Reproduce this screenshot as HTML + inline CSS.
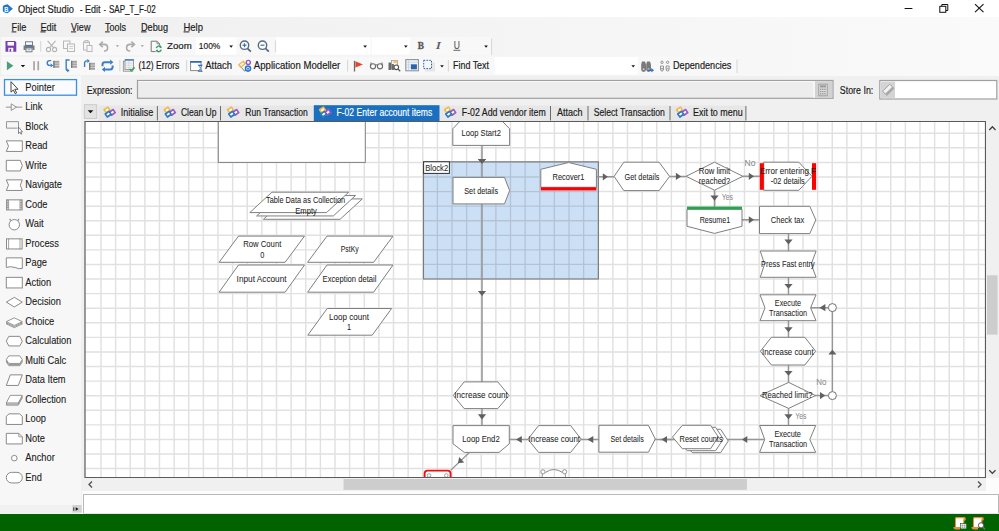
<!DOCTYPE html>
<html><head><meta charset="utf-8"><title>Object Studio</title>
<style>
html,body{margin:0;padding:0;width:999px;height:531px;overflow:hidden;background:#f0f0f0}
svg{display:block}
text{font-family:"Liberation Sans",sans-serif;white-space:pre}
</style></head><body>
<svg width="999" height="531" viewBox="0 0 999 531">
<rect x="0" y="0" width="999" height="531" fill="#f0f0f0" stroke="none" stroke-width="1" />
<rect x="0" y="0" width="999" height="17" fill="#ffffff" stroke="none" stroke-width="1" />
<defs><linearGradient id="tbg" x1="0" y1="0" x2="1" y2="0"><stop offset="0" stop-color="#efefef"/><stop offset="1" stop-color="#fafafa"/></linearGradient></defs>
<rect x="0" y="17" width="999" height="59" fill="url(#tbg)" stroke="none" stroke-width="1" />
<rect x="0" y="76" width="999" height="437" fill="#f0f0f0" stroke="none" stroke-width="1" />
<rect x="0" y="76" width="81" height="437" fill="#f7f7f7" stroke="none" stroke-width="1" />
<rect x="0" y="514" width="999" height="17" fill="#006300" stroke="none" stroke-width="1" />
<path d="M2.8,7 Q2.8,5.2 4.6,4.9 L7.6,4.3 L12.9,8.8 L7.6,13.2 L4.6,12.6 Q2.8,12.3 2.8,10.6 Z" fill="#1f7ac8" stroke="none" stroke-width="1" />
<text x="4.30" y="11.60" font-size="7" fill="#ffffff" textLength="4.20" lengthAdjust="spacingAndGlyphs" stroke="#ffffff" stroke-width="0" font-weight="bold">B</text>
<text x="17.90" y="13.20" font-size="10.9" fill="#1b1b1b" textLength="56.10" lengthAdjust="spacingAndGlyphs" stroke="#1b1b1b" stroke-width="0.18" >Object Studio</text>
<text x="80.00" y="13.20" font-size="10.9" fill="#1b1b1b" textLength="2.50" lengthAdjust="spacingAndGlyphs" stroke="#1b1b1b" stroke-width="0.18" >-</text>
<text x="85.00" y="13.20" font-size="10.9" fill="#1b1b1b" textLength="15.40" lengthAdjust="spacingAndGlyphs" stroke="#1b1b1b" stroke-width="0.18" >Edit</text>
<text x="103.80" y="13.20" font-size="10.9" fill="#1b1b1b" textLength="2.10" lengthAdjust="spacingAndGlyphs" stroke="#1b1b1b" stroke-width="0.18" >-</text>
<text x="108.90" y="13.20" font-size="10.9" fill="#1b1b1b" textLength="46.80" lengthAdjust="spacingAndGlyphs" stroke="#1b1b1b" stroke-width="0.18" >SAP_T_F-02</text>
<line x1="904.6" y1="8.5" x2="912.4" y2="8.5" stroke="#111" stroke-width="1" />
<rect x="939.8" y="6.3" width="6" height="6" fill="none" stroke="#111" stroke-width="1" />
<path d="M941.8,6.3 V4.5 H947.8 V10.5 H945.8" fill="none" stroke="#111" stroke-width="1" />
<line x1="975" y1="4.2" x2="983.5" y2="12.2" stroke="#111" stroke-width="1.1" />
<line x1="983.5" y1="4.2" x2="975" y2="12.2" stroke="#111" stroke-width="1.1" />
<text x="11.60" y="30.90" font-size="10.8" fill="#1b1b1b" textLength="14.70" lengthAdjust="spacingAndGlyphs" stroke="#1b1b1b" stroke-width="0.18" >File</text>
<line x1="11.6" y1="31.9" x2="16.33681332495286" y2="31.9" stroke="#222" stroke-width="1" />
<text x="40.40" y="30.90" font-size="10.8" fill="#1b1b1b" textLength="15.90" lengthAdjust="spacingAndGlyphs" stroke="#1b1b1b" stroke-width="0.18" >Edit</text>
<line x1="40.4" y1="31.9" x2="45.63159460140212" y2="31.9" stroke="#222" stroke-width="1" />
<text x="71.00" y="30.90" font-size="10.8" fill="#1b1b1b" textLength="19.40" lengthAdjust="spacingAndGlyphs" stroke="#1b1b1b" stroke-width="0.18" >View</text>
<line x1="71" y1="31.9" x2="76.1174331100865" y2="31.9" stroke="#222" stroke-width="1" />
<text x="105.00" y="30.90" font-size="10.8" fill="#1b1b1b" textLength="21.00" lengthAdjust="spacingAndGlyphs" stroke="#1b1b1b" stroke-width="0.18" >Tools</text>
<line x1="105" y1="31.9" x2="109.67061448359208" y2="31.9" stroke="#222" stroke-width="1" />
<text x="141.00" y="30.90" font-size="10.8" fill="#1b1b1b" textLength="27.00" lengthAdjust="spacingAndGlyphs" stroke="#1b1b1b" stroke-width="0.18" >Debug</text>
<line x1="141" y1="31.9" x2="146.62439793789125" y2="31.9" stroke="#222" stroke-width="1" />
<text x="183.50" y="30.90" font-size="10.8" fill="#1b1b1b" textLength="19.50" lengthAdjust="spacingAndGlyphs" stroke="#1b1b1b" stroke-width="0.18" >Help</text>
<line x1="183.5" y1="31.9" x2="189.3201978543792" y2="31.9" stroke="#222" stroke-width="1" />
<rect x="1" y="37" width="491" height="18.5" fill="#f8f8f8" stroke="none" stroke-width="1" />
<rect x="1" y="56.5" width="737" height="18.5" fill="#f8f8f8" stroke="none" stroke-width="1" />
<path d="M5.5,41 H15 L16.3,42.3 V51.7 H5.5 Z" fill="#7a3db5" stroke="none" stroke-width="1" />
<rect x="7.5" y="42" width="6.5" height="3.6" fill="#ffffff" stroke="none" stroke-width="1" />
<rect x="8.3" y="47.8" width="5" height="3.9" fill="#ffffff" stroke="none" stroke-width="1" />
<rect x="9.6" y="48.8" width="1.6" height="2.9" fill="#7a3db5" stroke="none" stroke-width="1" />
<rect x="25.5" y="41.8" width="7" height="3.5" fill="#ffffff" stroke="#7a7a7a" stroke-width="1" />
<path d="M23.6,45.5 H34.5 V50 H32.5 V48 H25.6 V50 H23.6 Z" fill="#7a7a7a" stroke="none" stroke-width="1" />
<rect x="25.6" y="45.2" width="7" height="1.1" fill="#2a73c2" stroke="none" stroke-width="1" />
<rect x="26" y="48" width="6" height="3.8" fill="#ffffff" stroke="#7a7a7a" stroke-width="1" />
<rect x="27.5" y="49.3" width="3" height="1" fill="#6aa0d8" stroke="none" stroke-width="1" />
<line x1="40.7" y1="41" x2="40.7" y2="51.8" stroke="#d6d6d6" stroke-width="1" />
<g stroke="#b4b4b4" fill="none" stroke-width="1.1"><circle cx="48.5" cy="49.5" r="2.1"/><circle cx="54.6" cy="49.5" r="2.1"/><line x1="49.6" y1="47.6" x2="55.5" y2="40.8"/><line x1="53.5" y1="47.6" x2="47.6" y2="40.8"/></g>
<g stroke="#b8b8b8" fill="#f7f7f7" stroke-width="1"><rect x="63.5" y="41" width="6.5" height="7.5"/><rect x="67.5" y="44" width="7" height="7.5"/></g>
<g stroke="#c8c8c8" stroke-width="0.8"><line x1="69" y1="46.5" x2="73" y2="46.5"/><line x1="69" y1="48.5" x2="73" y2="48.5"/></g>
<g stroke="#b8b8b8" fill="#f7f7f7" stroke-width="1"><rect x="83.5" y="42" width="6" height="8"/><rect x="87" y="45.5" width="5" height="6"/><rect x="85" y="40.6" width="3" height="2"/></g>
<path d="M100,44.4 H104.3 A3.3,3.3 0 0 1 104.3,51 H104" fill="none" stroke="#ababab" stroke-width="1.6" />
<path d="M102.8,41.6 L99.8,44.4 L102.8,47.2" fill="none" stroke="#ababab" stroke-width="1.6" />
<polygon points="115.80,45.20 119.00,45.20 117.40,47.00" fill="#9a9a9a" stroke="none" stroke-width="1" />
<path d="M134.2,44.4 H129.9 A3.3,3.3 0 0 0 129.9,51 H130.2" fill="none" stroke="#ababab" stroke-width="1.6" />
<path d="M131.4,41.6 L134.4,44.4 L131.4,47.2" fill="none" stroke="#ababab" stroke-width="1.6" />
<polygon points="140.70,45.20 143.90,45.20 142.30,47.00" fill="#9a9a9a" stroke="none" stroke-width="1" />
<path d="M155.6,51.6 H151.2 V41.2 H157 L159.6,43.8 V45.2" fill="none" stroke="#777" stroke-width="1" />
<path d="M157,41.2 V43.8 H159.6" fill="none" stroke="#777" stroke-width="0.8" />
<path d="M156.3,48.2 A2.6,2.6 0 0 1 161,47.2" fill="none" stroke="#3a9a6a" stroke-width="1.5" />
<path d="M161.2,49.6 A2.6,2.6 0 0 1 156.6,50.6" fill="none" stroke="#3a9a6a" stroke-width="1.5" />
<polygon points="160.00,45.60 162.00,47.60 159.60,48.20" fill="#3a9a6a" stroke="none" stroke-width="1" />
<polygon points="157.60,52.20 155.60,50.20 158.00,49.60" fill="#3a9a6a" stroke="none" stroke-width="1" />
<text x="167.00" y="49.30" font-size="9.9" fill="#1b1b1b" textLength="24.70" lengthAdjust="spacingAndGlyphs" stroke="#1b1b1b" stroke-width="0.18" >Zoom</text>
<rect x="196.1" y="37.4" width="40.3" height="17.1" fill="#ffffff" stroke="none" stroke-width="1" />
<text x="198.80" y="49.30" font-size="9.9" fill="#1b1b1b" textLength="21.50" lengthAdjust="spacingAndGlyphs" stroke="#1b1b1b" stroke-width="0.18" >100%</text>
<polygon points="229.30,45.60 233.00,45.60 231.15,47.80" fill="#111" stroke="none" stroke-width="1" />
<circle cx="244.5" cy="45.2" r="4.2" fill="#ffffff" stroke="#5a6a7a" stroke-width="1.4"/>
<line x1="247.5" y1="48.3" x2="250.8" y2="51.6" stroke="#5a6a7a" stroke-width="1.8" />
<line x1="242.5" y1="45.2" x2="246.5" y2="45.2" stroke="#2a73c2" stroke-width="1.2" />
<line x1="244.5" y1="43.2" x2="244.5" y2="47.2" stroke="#2a73c2" stroke-width="1.2" />
<circle cx="262.5" cy="45.2" r="4.2" fill="#ffffff" stroke="#5a6a7a" stroke-width="1.4"/>
<line x1="265.5" y1="48.3" x2="268.8" y2="51.6" stroke="#5a6a7a" stroke-width="1.8" />
<line x1="260.5" y1="45.2" x2="264.5" y2="45.2" stroke="#2a73c2" stroke-width="1.2" />
<line x1="275.4" y1="40.5" x2="275.4" y2="52" stroke="#d6d6d6" stroke-width="1" />
<rect x="276.5" y="37.4" width="94" height="17.1" fill="#ffffff" stroke="none" stroke-width="1" />
<polygon points="363.30,45.60 367.00,45.60 365.15,47.80" fill="#111" stroke="none" stroke-width="1" />
<rect x="372" y="37.4" width="37.7" height="17.1" fill="#ffffff" stroke="none" stroke-width="1" />
<polygon points="404.00,45.60 407.70,45.60 405.85,47.80" fill="#111" stroke="none" stroke-width="1" />
<text x="417.80" y="48.60" font-size="10.5" fill="#555555" textLength="6.20" lengthAdjust="spacingAndGlyphs" stroke="#555555" stroke-width="0.3" font-weight="bold" style="font-family:'Liberation Serif',serif">B</text>
<text x="435.80" y="48.60" font-size="10.5" fill="#555555" textLength="5.00" lengthAdjust="spacingAndGlyphs" stroke="#555555" stroke-width="0.2" font-style="italic" style="font-family:'Liberation Serif',serif">I</text>
<text x="453.80" y="48.60" font-size="10" fill="#555555" textLength="6.20" lengthAdjust="spacingAndGlyphs" stroke="#555555" stroke-width="0.1" >U</text>
<line x1="453.5" y1="50.3" x2="460.3" y2="50.3" stroke="#555555" stroke-width="0.9" />
<polygon points="484.20,45.60 487.90,45.60 486.05,47.80" fill="#111" stroke="none" stroke-width="1" />
<line x1="491.6" y1="38.5" x2="491.6" y2="55" stroke="#d6d6d6" stroke-width="1" />
<polygon points="6.90,61.20 13.40,65.75 6.90,70.30" fill="#4a9d7f" stroke="none" stroke-width="1" />
<polygon points="20.70,65.00 25.20,65.00 22.95,67.30" fill="#111" stroke="none" stroke-width="1" />
<rect x="33.2" y="61.2" width="1.7" height="9.1" fill="#a6a6a6" stroke="none" stroke-width="1" />
<rect x="37.4" y="61.2" width="1.7" height="9.1" fill="#a6a6a6" stroke="none" stroke-width="1" />
<path d="M51.2,60.6 H49.6 A2.4,2.4 0 0 0 49.6,65.4 H50.8" fill="none" stroke="#3a7ec8" stroke-width="1.4" />
<polygon points="50.60,63.30 53.20,65.40 50.60,67.50" fill="#3a7ec8" stroke="none" stroke-width="1" />
<rect x="53.3" y="60.8" width="6" height="7" fill="#a3a3a3" stroke="none" stroke-width="1" />
<g stroke="#e4e4e4" stroke-width="0.7"><line x1="54.599999999999994" y1="63.099999999999994" x2="59.3" y2="63.099999999999994"/><line x1="54.599999999999994" y1="65.39999999999999" x2="59.3" y2="65.39999999999999"/></g>
<rect x="53.3" y="60.8" width="1.3" height="7" fill="#7a7a7a" stroke="none" stroke-width="1" />
<path d="M69.6,60 H66.2 V69.2 Q66.2,70.6 67.6,70.6" fill="none" stroke="#3a7ec8" stroke-width="1.4" />
<polygon points="67.20,68.60 69.60,70.60 67.20,72.60" fill="#3a7ec8" stroke="none" stroke-width="1" />
<rect x="71" y="60.8" width="6" height="7" fill="#a3a3a3" stroke="none" stroke-width="1" />
<g stroke="#e4e4e4" stroke-width="0.7"><line x1="72.3" y1="63.099999999999994" x2="77" y2="63.099999999999994"/><line x1="72.3" y1="65.39999999999999" x2="77" y2="65.39999999999999"/></g>
<rect x="71" y="60.8" width="1.3" height="7" fill="#7a7a7a" stroke="none" stroke-width="1" />
<path d="M84.6,67 V63.2 A2.3,2.3 0 0 1 86.9,60.9 H87.6" fill="none" stroke="#3a7ec8" stroke-width="1.4" />
<polygon points="87.30,58.80 89.80,60.90 87.30,63.00" fill="#3a7ec8" stroke="none" stroke-width="1" />
<rect x="89" y="62.8" width="6" height="7" fill="#a3a3a3" stroke="none" stroke-width="1" />
<g stroke="#e4e4e4" stroke-width="0.7"><line x1="90.3" y1="65.1" x2="95" y2="65.1"/><line x1="90.3" y1="67.39999999999999" x2="95" y2="67.39999999999999"/></g>
<rect x="89" y="62.8" width="1.3" height="7" fill="#7a7a7a" stroke="none" stroke-width="1" />
<path d="M102.5,66.2 V64.6 A2.4,2.4 0 0 1 104.9,62.2 H110.6" fill="none" stroke="#3a7ec8" stroke-width="2" />
<polygon points="110.20,59.60 113.40,62.20 110.20,64.80" fill="#3a7ec8" stroke="none" stroke-width="1" />
<path d="M112.6,65.4 V67 A2.4,2.4 0 0 1 110.2,69.4 H104.6" fill="none" stroke="#3a7ec8" stroke-width="2" />
<polygon points="105.00,66.80 101.80,69.40 105.00,72.00" fill="#3a7ec8" stroke="none" stroke-width="1" />
<line x1="119.9" y1="60" x2="119.9" y2="71.5" stroke="#d6d6d6" stroke-width="1" />
<rect x="123.3" y="61.2" width="9.5" height="10" fill="#e8e8e8" stroke="#8a8a8a" stroke-width="0.8" />
<rect x="125" y="59.6" width="8.6" height="9.8" fill="#f4f4f4" stroke="#8a8a8a" stroke-width="0.8" />
<rect x="125" y="59.3" width="8.6" height="1.4" fill="#3a7ec8" stroke="none" stroke-width="1" />
<g stroke="#cfcfcf" stroke-width="0.6"><line x1="126" y1="63" x2="132.8" y2="63"/><line x1="126" y1="65.3" x2="132.8" y2="65.3"/><line x1="126" y1="67.6" x2="132.8" y2="67.6"/><line x1="128.8" y1="61" x2="128.8" y2="69"/></g>
<path d="M129.6,69 L131.3,70.7 L134.6,67.4" fill="none" stroke="#3aa070" stroke-width="1.5" />
<text x="138.50" y="68.60" font-size="10.8" fill="#1b1b1b" textLength="40.90" lengthAdjust="spacingAndGlyphs" stroke="#1b1b1b" stroke-width="0.18" >(12) Errors</text>
<line x1="186.6" y1="60" x2="186.6" y2="71.6" stroke="#d6d6d6" stroke-width="1" />
<rect x="190.6" y="61.8" width="10.4" height="8.8" fill="#ffffff" stroke="#8a8a8a" stroke-width="1" />
<rect x="190.1" y="61" width="11.4" height="1.7" fill="#2a6ab8" stroke="none" stroke-width="1" />
<polygon points="197.60,64.80 202.80,64.80 200.20,68.20" fill="#2a6ab8" stroke="none" stroke-width="1" />
<polygon points="197.60,71.70 202.80,71.70 200.20,68.20" fill="#2a6ab8" stroke="none" stroke-width="1" />
<polygon points="199.00,66.00 201.40,66.00 200.20,67.40" fill="#f3dd8a" stroke="none" stroke-width="1" />
<polygon points="199.00,70.60 201.40,70.60 200.20,69.20" fill="#f3dd8a" stroke="none" stroke-width="1" />
<text x="205.20" y="68.60" font-size="10.8" fill="#1b1b1b" textLength="26.90" lengthAdjust="spacingAndGlyphs" stroke="#1b1b1b" stroke-width="0.18" >Attach</text>
<g transform="translate(242,64.2) rotate(-40)"><rect x="-3.6" y="-2.3" width="7.2" height="4.6" rx="0.8" fill="#e9b95a"/><rect x="-2" y="-1" width="4" height="2" fill="#fff6dd"/></g>
<path d="M241.5,67.5 L244.6,71.2 L246.5,69.5" fill="none" stroke="#7a7a7a" stroke-width="1" />
<circle cx="248.3" cy="62.4" r="2" fill="#ffffff" stroke="#9058c8" stroke-width="1.4"/>
<circle cx="248" cy="68.6" r="2.5" fill="#ffffff" stroke="#2f78c4" stroke-width="1.6"/>
<circle cx="248" cy="68.8" r="1" fill="#2f78c4"/>
<text x="253.80" y="68.60" font-size="10.8" fill="#1b1b1b" textLength="86.50" lengthAdjust="spacingAndGlyphs" stroke="#1b1b1b" stroke-width="0.18" >Application Modeller</text>
<line x1="347.6" y1="60" x2="347.6" y2="71.6" stroke="#d6d6d6" stroke-width="1" />
<line x1="354.5" y1="60.8" x2="354.5" y2="71.5" stroke="#6a6a6a" stroke-width="1.3" />
<polygon points="355.40,61.20 363.00,64.40 355.40,67.60" fill="#e2472b" stroke="none" stroke-width="1" />
<g fill="none" stroke="#6e6e6e" stroke-width="1.1"><circle cx="373" cy="66.3" r="2.6"/><circle cx="380" cy="66.3" r="2.6"/><path d="M375.3,65.3 Q376.5,64.3 377.7,65.3"/><path d="M370.4,66 L371.2,62.5 M382.6,66 L381.8,62.5"/></g>
<rect x="391.5" y="60.5" width="6" height="8" fill="#f5f5f5" stroke="#9a9a9a" stroke-width="0.8" />
<rect x="393.5" y="60.5" width="4" height="2.5" fill="#f2c46a" stroke="none" stroke-width="1" />
<g fill="#6a6a6a"><rect x="388.5" y="62.5" width="2.6" height="7.5" rx="0.6"/><rect x="391.6" y="64" width="2.3" height="6" rx="0.6"/></g>
<g fill="#ffffff" stroke="#555" stroke-width="1.1"><circle cx="396.3" cy="67.3" r="2.3"/></g>
<line x1="397.9" y1="68.9" x2="400.2" y2="71.2" stroke="#555" stroke-width="1.3" />
<rect x="405.8" y="59.6" width="12.6" height="11.2" fill="#eef3f9" stroke="#8a8a8a" stroke-width="1" />
<g stroke="#b7c9dd" stroke-width="0.6"><line x1="406" y1="62.2" x2="418.2" y2="62.2"/><line x1="408.5" y1="59.8" x2="408.5" y2="70.6"/><line x1="406" y1="64.8" x2="410.5" y2="64.8"/><line x1="406" y1="67.4" x2="410.5" y2="67.4"/></g>
<rect x="410.9" y="64.3" width="6" height="5" fill="#2a63b0" stroke="none" stroke-width="1" />
<rect x="425" y="62.5" width="10" height="9" fill="#e6e6e6" stroke="none" stroke-width="1" />
<rect x="423.7" y="60.3" width="7.8" height="8.3" fill="#f7f7f7" stroke="#2a63b0" stroke-width="1" stroke-dasharray="1.6,1.2"/>
<polygon points="440.20,65.30 443.80,65.30 442.00,67.50" fill="#111" stroke="none" stroke-width="1" />
<line x1="448.4" y1="60" x2="448.4" y2="71.6" stroke="#d6d6d6" stroke-width="1" />
<text x="453.00" y="68.60" font-size="10.8" fill="#1b1b1b" textLength="36.00" lengthAdjust="spacingAndGlyphs" stroke="#1b1b1b" stroke-width="0.18" >Find Text</text>
<rect x="494.9" y="57" width="142.9" height="17.3" fill="#ffffff" stroke="none" stroke-width="1" />
<polygon points="631.40,65.30 635.00,65.30 633.20,67.50" fill="#111" stroke="none" stroke-width="1" />
<g fill="#7a7a7a"><path d="M642,61.5 h3 l1,3 v5 a2.2,2.2 0 0 1 -4.8,0 v-5 z"/><path d="M647,61.5 h3 l1,3 v5 a2.2,2.2 0 0 1 -4.8,0 v-5 z"/></g>
<g fill="#c8c8c8"><circle cx="643.6" cy="69.3" r="1"/><circle cx="648.6" cy="69.3" r="1"/></g>
<path d="M647.5,70.3 H652.3" fill="none" stroke="#2a73c2" stroke-width="1.4" />
<polygon points="651.30,68.00 654.00,70.30 651.30,72.60" fill="#2a73c2" stroke="none" stroke-width="1" />
<g fill="#f2f2f2" stroke="#8c8c8c" stroke-width="0.9"><circle cx="662" cy="62.3" r="1.2"/><circle cx="667.6" cy="62.3" r="1.2"/><path d="M660.5,66 h3 v3.5 h-3 z"/><path d="M666.1,66 h3 v3.5 h-3 z"/><circle cx="662" cy="69.8" r="1.3"/><circle cx="667.6" cy="69.8" r="1.3"/></g>
<text x="673.00" y="68.60" font-size="10.8" fill="#1b1b1b" textLength="58.40" lengthAdjust="spacingAndGlyphs" stroke="#1b1b1b" stroke-width="0.18" >Dependencies</text>
<line x1="737" y1="59.5" x2="737" y2="73" stroke="#d6d6d6" stroke-width="1" />
<rect x="4.5" y="79.6" width="72" height="15.6" fill="#f9fbfe" stroke="#3d8ee0" stroke-width="1.3" />
<text x="25.30" y="90.80" font-size="10.6" fill="#1b1b1b" textLength="29.47" lengthAdjust="spacingAndGlyphs" stroke="#1b1b1b" stroke-width="0.1" >Pointer</text>
<path d="M11,81.65 V92.15 L13.3,89.95 L15.2,93.65 L16.6,92.95 L14.8,89.25 L18,89.25 Z" fill="#ffffff" stroke="#333" stroke-width="0.9" />
<text x="25.30" y="110.30" font-size="10.6" fill="#1b1b1b" textLength="17.06" lengthAdjust="spacingAndGlyphs" stroke="#1b1b1b" stroke-width="0.1" >Link</text>
<line x1="5.8" y1="107.15" x2="22.2" y2="107.15" stroke="#8a8a8a" stroke-width="0.9" />
<polygon points="11.20,103.85 16.50,107.15 11.20,110.45" fill="#f7f7f7" stroke="#8a8a8a" stroke-width="0.9" />
<text x="25.30" y="129.80" font-size="10.6" fill="#1b1b1b" textLength="22.74" lengthAdjust="spacingAndGlyphs" stroke="#1b1b1b" stroke-width="0.1" >Block</text>
<path d="M6.5,128.15 V121.65 H18.5 V128.15" fill="none" stroke="#8a8a8a" stroke-width="0.9" />
<line x1="6.5" y1="128.15" x2="17.5" y2="128.15" stroke="#8a8a8a" stroke-width="0.9" />
<path d="M18.5,127.15 V133.65 L19.8,132.25 L21,134.25 L21.8,133.85 L20.8,131.85 L22.5,131.85 Z" fill="#ffffff" stroke="#555" stroke-width="0.7" />
<text x="25.30" y="149.30" font-size="10.6" fill="#1b1b1b" textLength="22.23" lengthAdjust="spacingAndGlyphs" stroke="#1b1b1b" stroke-width="0.1" >Read</text>
<polygon points="6.30,140.85 22.30,140.85 22.30,151.45 6.30,151.45 8.50,146.15" fill="#ffffff" stroke="#8a8a8a" stroke-width="1" />
<text x="25.30" y="168.80" font-size="10.6" fill="#1b1b1b" textLength="21.53" lengthAdjust="spacingAndGlyphs" stroke="#1b1b1b" stroke-width="0.1" >Write</text>
<polygon points="6.30,160.35 20.30,160.35 22.30,165.65 20.30,170.95 6.30,170.95" fill="#ffffff" stroke="#8a8a8a" stroke-width="1" />
<text x="25.30" y="188.30" font-size="10.6" fill="#1b1b1b" textLength="36.71" lengthAdjust="spacingAndGlyphs" stroke="#1b1b1b" stroke-width="0.1" >Navigate</text>
<polygon points="6.30,179.85 22.30,179.85 20.30,185.15 22.30,190.45 6.30,190.45 8.50,185.15" fill="#ffffff" stroke="#8a8a8a" stroke-width="1" />
<text x="25.30" y="207.80" font-size="10.6" fill="#1b1b1b" textLength="22.23" lengthAdjust="spacingAndGlyphs" stroke="#1b1b1b" stroke-width="0.1" >Code</text>
<rect x="6.5" y="199.85" width="15.6" height="10.100000000000023" fill="#ffffff" stroke="#8a8a8a" stroke-width="1" />
<rect x="6.5" y="199.85" width="2.6" height="10.100000000000023" fill="#9a9a9a" stroke="none" stroke-width="1" />
<rect x="19.5" y="199.85" width="2.6" height="10.100000000000023" fill="#9a9a9a" stroke="none" stroke-width="1" />
<line x1="7.8" y1="200.85" x2="7.8" y2="209.95000000000002" stroke="#ffffff" stroke-width="0.7" stroke-dasharray="1.2,1.2"/>
<line x1="20.8" y1="200.85" x2="20.8" y2="209.95000000000002" stroke="#ffffff" stroke-width="0.7" stroke-dasharray="1.2,1.2"/>
<text x="25.30" y="227.30" font-size="10.6" fill="#1b1b1b" textLength="18.25" lengthAdjust="spacingAndGlyphs" stroke="#1b1b1b" stroke-width="0.1" >Wait</text>
<circle cx="14.3" cy="224.75" r="5.2" fill="#ffffff" stroke="#8a8a8a" stroke-width="1"/>
<line x1="9.6" y1="218.95000000000002" x2="10.8" y2="220.55" stroke="#8a8a8a" stroke-width="1.1" />
<line x1="19" y1="218.95000000000002" x2="17.8" y2="220.55" stroke="#8a8a8a" stroke-width="1.1" />
<text x="25.30" y="246.80" font-size="10.6" fill="#1b1b1b" textLength="33.60" lengthAdjust="spacingAndGlyphs" stroke="#1b1b1b" stroke-width="0.1" >Process</text>
<rect x="6.5" y="238.85" width="15.6" height="10.100000000000023" fill="#ffffff" stroke="#8a8a8a" stroke-width="1" />
<line x1="8.6" y1="238.85" x2="8.6" y2="249.25000000000003" stroke="#8a8a8a" stroke-width="0.8" />
<line x1="20" y1="238.85" x2="20" y2="249.25000000000003" stroke="#8a8a8a" stroke-width="0.8" />
<text x="25.30" y="266.30" font-size="10.6" fill="#1b1b1b" textLength="21.72" lengthAdjust="spacingAndGlyphs" stroke="#1b1b1b" stroke-width="0.1" >Page</text>
<path d="M6.3,267.45 V257.84999999999997 H22.3 V268.45 Q19,269.45 15,267.45 Q10,265.95 6.3,267.45 Z" fill="#ffffff" stroke="#8a8a8a" stroke-width="1" />
<text x="25.30" y="285.80" font-size="10.6" fill="#1b1b1b" textLength="25.85" lengthAdjust="spacingAndGlyphs" stroke="#1b1b1b" stroke-width="0.1" >Action</text>
<rect x="6.3" y="277.34999999999997" width="16" height="10.600000000000023" fill="#ffffff" stroke="#8a8a8a" stroke-width="1" />
<text x="25.30" y="305.30" font-size="10.6" fill="#1b1b1b" textLength="35.67" lengthAdjust="spacingAndGlyphs" stroke="#1b1b1b" stroke-width="0.1" >Decision</text>
<polygon points="6.30,302.15 14.30,297.35 22.30,302.15 14.30,306.95" fill="#ffffff" stroke="#8a8a8a" stroke-width="1" />
<text x="25.30" y="324.80" font-size="10.6" fill="#1b1b1b" textLength="28.95" lengthAdjust="spacingAndGlyphs" stroke="#1b1b1b" stroke-width="0.1" >Choice</text>
<polygon points="6.30,323.85 14.30,320.05 22.30,323.85 14.30,327.65" fill="#ffffff" stroke="#8a8a8a" stroke-width="0.9" />
<polygon points="6.30,322.75 14.30,318.95 22.30,322.75 14.30,326.55" fill="#ffffff" stroke="#8a8a8a" stroke-width="0.9" />
<polygon points="6.30,321.65 14.30,317.85 22.30,321.65 14.30,325.45" fill="#ffffff" stroke="#8a8a8a" stroke-width="0.9" />
<text x="25.30" y="344.30" font-size="10.6" fill="#1b1b1b" textLength="46.01" lengthAdjust="spacingAndGlyphs" stroke="#1b1b1b" stroke-width="0.1" >Calculation</text>
<polygon points="6.30,341.15 8.80,336.35 19.80,336.35 22.30,341.15 19.80,345.95 8.80,345.95" fill="#ffffff" stroke="#8a8a8a" stroke-width="1" />
<text x="25.30" y="363.80" font-size="10.6" fill="#1b1b1b" textLength="40.82" lengthAdjust="spacingAndGlyphs" stroke="#1b1b1b" stroke-width="0.1" >Multi Calc</text>
<polygon points="6.30,361.85 8.80,358.05 19.80,358.05 22.30,361.85 19.80,365.65 8.80,365.65" fill="#ffffff" stroke="#8a8a8a" stroke-width="0.9" />
<polygon points="6.30,360.75 8.80,356.95 19.80,356.95 22.30,360.75 19.80,364.55 8.80,364.55" fill="#ffffff" stroke="#8a8a8a" stroke-width="0.9" />
<polygon points="6.30,359.65 8.80,355.85 19.80,355.85 22.30,359.65 19.80,363.45 8.80,363.45" fill="#ffffff" stroke="#8a8a8a" stroke-width="0.9" />
<text x="25.30" y="383.30" font-size="10.6" fill="#1b1b1b" textLength="40.32" lengthAdjust="spacingAndGlyphs" stroke="#1b1b1b" stroke-width="0.1" >Data Item</text>
<polygon points="10.30,374.85 22.30,374.85 18.30,385.45 6.30,385.45" fill="#ffffff" stroke="#8a8a8a" stroke-width="1" />
<text x="25.30" y="402.80" font-size="10.6" fill="#1b1b1b" textLength="40.84" lengthAdjust="spacingAndGlyphs" stroke="#1b1b1b" stroke-width="0.1" >Collection</text>
<polygon points="10.30,397.55 22.30,397.55 18.30,405.15 6.30,405.15" fill="#ffffff" stroke="#8a8a8a" stroke-width="0.9" />
<polygon points="10.30,396.45 22.30,396.45 18.30,404.05 6.30,404.05" fill="#ffffff" stroke="#8a8a8a" stroke-width="0.9" />
<polygon points="10.30,395.35 22.30,395.35 18.30,402.95 6.30,402.95" fill="#ffffff" stroke="#8a8a8a" stroke-width="0.9" />
<text x="25.30" y="422.30" font-size="10.6" fill="#1b1b1b" textLength="20.69" lengthAdjust="spacingAndGlyphs" stroke="#1b1b1b" stroke-width="0.1" >Loop</text>
<polygon points="6.30,424.45 6.30,416.35 9.00,413.85 19.60,413.85 22.30,416.35 22.30,424.45" fill="#ffffff" stroke="#8a8a8a" stroke-width="1" />
<text x="25.30" y="441.80" font-size="10.6" fill="#1b1b1b" textLength="19.64" lengthAdjust="spacingAndGlyphs" stroke="#1b1b1b" stroke-width="0.1" >Note</text>
<polygon points="6.30,433.35 18.80,433.35 22.30,436.85 22.30,443.95 6.30,443.95" fill="#ffffff" stroke="#8a8a8a" stroke-width="1" />
<path d="M18.8,433.34999999999997 V436.84999999999997 H22.3" fill="none" stroke="#8a8a8a" stroke-width="0.8" />
<text x="25.30" y="461.30" font-size="10.6" fill="#1b1b1b" textLength="29.47" lengthAdjust="spacingAndGlyphs" stroke="#1b1b1b" stroke-width="0.1" >Anchor</text>
<circle cx="14.3" cy="458.15" r="2.8" fill="#ffffff" stroke="#8a8a8a" stroke-width="1"/>
<text x="25.30" y="480.80" font-size="10.6" fill="#1b1b1b" textLength="16.55" lengthAdjust="spacingAndGlyphs" stroke="#1b1b1b" stroke-width="0.1" >End</text>
<rect x="6.3" y="472.34999999999997" width="16" height="10.600000000000023" fill="#ffffff" stroke="#8a8a8a" stroke-width="1" rx="5.3"/>
<rect x="0" y="505" width="82" height="8" fill="#f1f1f1" stroke="none" stroke-width="1" />
<rect x="72.4" y="505" width="9.3" height="7.5" fill="#d2d2d2" stroke="none" stroke-width="1" />
<polygon points="75.70,507.30 78.60,509.00 75.70,510.80" fill="#111" stroke="none" stroke-width="1" />
<line x1="73.8" y1="507.3" x2="73.8" y2="510.8" stroke="#222" stroke-width="0.9" />
<text x="86.70" y="93.80" font-size="11" fill="#1b1b1b" textLength="45.80" lengthAdjust="spacingAndGlyphs" stroke="#1b1b1b" stroke-width="0.18" >Expression:</text>
<rect x="137.5" y="80.5" width="695.5" height="17.8" fill="#ededed" stroke="#a0a0a0" stroke-width="1.2" />
<line x1="138.5" y1="81.6" x2="832" y2="81.6" stroke="#ffffff" stroke-width="0.8" />
<rect x="813" y="81.2" width="2.2" height="16.4" fill="#f6f6f6" stroke="none" stroke-width="1" />
<rect x="815" y="81.2" width="17.2" height="16.4" fill="#d2d2d2" stroke="none" stroke-width="1" />
<rect x="818.8" y="84.2" width="8.4" height="11.6" fill="#e2e2e2" stroke="#9a9a9a" stroke-width="0.9" />
<rect x="820" y="85.3" width="6" height="2.2" fill="#9a9a9a" stroke="none" stroke-width="1" />
<g fill="#8a8a8a"><rect x="820.1" y="88.6" width="1.3" height="1.3"/><rect x="820.1" y="90.9" width="1.3" height="1.3"/><rect x="820.1" y="93.2" width="1.3" height="1.3"/><rect x="822.2" y="88.6" width="1.3" height="1.3"/><rect x="822.2" y="90.9" width="1.3" height="1.3"/><rect x="822.2" y="93.2" width="1.3" height="1.3"/><rect x="824.3" y="88.6" width="1.3" height="1.3"/><rect x="824.3" y="90.9" width="1.3" height="1.3"/><rect x="824.3" y="93.2" width="1.3" height="1.3"/></g>
<text x="839.80" y="94.00" font-size="11" fill="#1b1b1b" textLength="33.50" lengthAdjust="spacingAndGlyphs" stroke="#1b1b1b" stroke-width="0.18" >Store In:</text>
<rect x="879.8" y="80.5" width="117" height="18.5" fill="#ffffff" stroke="#a0a0a0" stroke-width="1.2" />
<rect x="881" y="81.6" width="14" height="16.3" fill="#d4d4d4" stroke="none" stroke-width="1" />
<g transform="translate(888.3,89.8) rotate(-45)"><rect x="-5" y="-3" width="10" height="6" rx="1" fill="#f2f2f2" stroke="#9a9a9a" stroke-width="0.9"/><rect x="-5" y="0.6" width="10" height="2.4" fill="#a8a8a8"/></g>
<rect x="84.3" y="104.7" width="12.5" height="13.7" fill="#e3e3e3" stroke="#c4c4c4" stroke-width="0.8" />
<polygon points="87.70,110.30 93.30,110.30 90.50,113.20" fill="#111" stroke="none" stroke-width="1" />
<rect x="98.5" y="105.5" width="647.5" height="15.5" fill="#e7e7e7" stroke="none" stroke-width="1" />
<g transform="translate(107.10,110.00) rotate(-35)"><rect x="-3.1" y="-2.7" width="6.2" height="5.4" rx="0.8" fill="#f2b844"/><rect x="-1.5" y="-1.0" width="3" height="1.9" fill="#ffffff"/></g>
<g transform="translate(112.30,112.40) rotate(-35)"><rect x="-3.1" y="-2.7" width="6.2" height="5.4" rx="0.8" fill="#9b59c9"/><rect x="-1.5" y="-1.0" width="3" height="1.9" fill="#ffffff"/></g>
<g transform="translate(108.20,114.20) rotate(-35)"><rect x="-3.1" y="-2.7" width="6.2" height="5.4" rx="0.8" fill="#2f78c4"/><rect x="-1.5" y="-1.0" width="3" height="1.9" fill="#ffffff"/></g>
<text x="120.80" y="116.00" font-size="10.2" fill="#1b1b1b" textLength="32.50" lengthAdjust="spacingAndGlyphs" stroke="#1b1b1b" stroke-width="0.18" >Initialise</text>
<line x1="157.4" y1="106" x2="157.4" y2="120.5" stroke="#6a6a6a" stroke-width="1" />
<g transform="translate(167.20,110.00) rotate(-35)"><rect x="-3.1" y="-2.7" width="6.2" height="5.4" rx="0.8" fill="#f2b844"/><rect x="-1.5" y="-1.0" width="3" height="1.9" fill="#ffffff"/></g>
<g transform="translate(172.40,112.40) rotate(-35)"><rect x="-3.1" y="-2.7" width="6.2" height="5.4" rx="0.8" fill="#9b59c9"/><rect x="-1.5" y="-1.0" width="3" height="1.9" fill="#ffffff"/></g>
<g transform="translate(168.30,114.20) rotate(-35)"><rect x="-3.1" y="-2.7" width="6.2" height="5.4" rx="0.8" fill="#2f78c4"/><rect x="-1.5" y="-1.0" width="3" height="1.9" fill="#ffffff"/></g>
<text x="180.90" y="116.00" font-size="10.2" fill="#1b1b1b" textLength="35.60" lengthAdjust="spacingAndGlyphs" stroke="#1b1b1b" stroke-width="0.18" >Clean Up</text>
<line x1="220.5" y1="106" x2="220.5" y2="120.5" stroke="#6a6a6a" stroke-width="1" />
<g transform="translate(230.60,110.00) rotate(-35)"><rect x="-3.1" y="-2.7" width="6.2" height="5.4" rx="0.8" fill="#f2b844"/><rect x="-1.5" y="-1.0" width="3" height="1.9" fill="#ffffff"/></g>
<g transform="translate(235.80,112.40) rotate(-35)"><rect x="-3.1" y="-2.7" width="6.2" height="5.4" rx="0.8" fill="#9b59c9"/><rect x="-1.5" y="-1.0" width="3" height="1.9" fill="#ffffff"/></g>
<g transform="translate(231.70,114.20) rotate(-35)"><rect x="-3.1" y="-2.7" width="6.2" height="5.4" rx="0.8" fill="#2f78c4"/><rect x="-1.5" y="-1.0" width="3" height="1.9" fill="#ffffff"/></g>
<text x="245.30" y="116.00" font-size="10.2" fill="#1b1b1b" textLength="62.40" lengthAdjust="spacingAndGlyphs" stroke="#1b1b1b" stroke-width="0.18" >Run Transaction</text>
<rect x="313.8" y="105.2" width="125.7" height="15.8" fill="#1a6fc0" stroke="none" stroke-width="1" />
<g transform="translate(322.60,110.00) rotate(-35)"><rect x="-3.1" y="-2.7" width="6.2" height="5.4" rx="0.8" fill="#f2b844"/><rect x="-1.5" y="-1.0" width="3" height="1.9" fill="#ffffff"/></g>
<g transform="translate(327.80,112.40) rotate(-35)"><rect x="-3.1" y="-2.7" width="6.2" height="5.4" rx="0.8" fill="#9b59c9"/><rect x="-1.5" y="-1.0" width="3" height="1.9" fill="#ffffff"/></g>
<g transform="translate(323.70,114.20) rotate(-35)"><rect x="-3.1" y="-2.7" width="6.2" height="5.4" rx="0.8" fill="#2f78c4"/><rect x="-1.5" y="-1.0" width="3" height="1.9" fill="#ffffff"/></g>
<text x="336.50" y="116.00" font-size="10.2" fill="#ffffff" textLength="95.80" lengthAdjust="spacingAndGlyphs" stroke="#ffffff" stroke-width="0.15" >F-02 Enter account items</text>
<g transform="translate(447.60,110.00) rotate(-35)"><rect x="-3.1" y="-2.7" width="6.2" height="5.4" rx="0.8" fill="#f2b844"/><rect x="-1.5" y="-1.0" width="3" height="1.9" fill="#ffffff"/></g>
<g transform="translate(452.80,112.40) rotate(-35)"><rect x="-3.1" y="-2.7" width="6.2" height="5.4" rx="0.8" fill="#9b59c9"/><rect x="-1.5" y="-1.0" width="3" height="1.9" fill="#ffffff"/></g>
<g transform="translate(448.70,114.20) rotate(-35)"><rect x="-3.1" y="-2.7" width="6.2" height="5.4" rx="0.8" fill="#2f78c4"/><rect x="-1.5" y="-1.0" width="3" height="1.9" fill="#ffffff"/></g>
<text x="461.80" y="116.00" font-size="10.2" fill="#1b1b1b" textLength="83.90" lengthAdjust="spacingAndGlyphs" stroke="#1b1b1b" stroke-width="0.18" >F-02 Add vendor item</text>
<line x1="550.5" y1="106" x2="550.5" y2="120.5" stroke="#6a6a6a" stroke-width="1" />
<text x="556.90" y="116.00" font-size="10.2" fill="#1b1b1b" textLength="25.60" lengthAdjust="spacingAndGlyphs" stroke="#1b1b1b" stroke-width="0.18" >Attach</text>
<line x1="588" y1="106" x2="588" y2="120.5" stroke="#6a6a6a" stroke-width="1" />
<text x="593.70" y="116.00" font-size="10.2" fill="#1b1b1b" textLength="71.20" lengthAdjust="spacingAndGlyphs" stroke="#1b1b1b" stroke-width="0.18" >Select Transaction</text>
<line x1="670" y1="106" x2="670" y2="120.5" stroke="#6a6a6a" stroke-width="1" />
<g transform="translate(679.60,110.00) rotate(-35)"><rect x="-3.1" y="-2.7" width="6.2" height="5.4" rx="0.8" fill="#f2b844"/><rect x="-1.5" y="-1.0" width="3" height="1.9" fill="#ffffff"/></g>
<g transform="translate(684.80,112.40) rotate(-35)"><rect x="-3.1" y="-2.7" width="6.2" height="5.4" rx="0.8" fill="#9b59c9"/><rect x="-1.5" y="-1.0" width="3" height="1.9" fill="#ffffff"/></g>
<g transform="translate(680.70,114.20) rotate(-35)"><rect x="-3.1" y="-2.7" width="6.2" height="5.4" rx="0.8" fill="#2f78c4"/><rect x="-1.5" y="-1.0" width="3" height="1.9" fill="#ffffff"/></g>
<text x="693.00" y="116.00" font-size="10.2" fill="#1b1b1b" textLength="49.70" lengthAdjust="spacingAndGlyphs" stroke="#1b1b1b" stroke-width="0.18" >Exit to menu</text>
<line x1="745.9" y1="106" x2="745.9" y2="120.5" stroke="#6a6a6a" stroke-width="1" />
<defs><clipPath id="cv"><rect x="85.5" y="122" width="900" height="355"/></clipPath></defs>
<rect x="85" y="121.5" width="901" height="356" fill="#ffffff" stroke="none" stroke-width="1" />
<g clip-path="url(#cv)">
<path d="M101.00,121V478M115.62,121V478M130.25,121V478M144.88,121V478M159.50,121V478M174.12,121V478M188.75,121V478M203.38,121V478M218.00,121V478M232.62,121V478M247.25,121V478M261.88,121V478M276.50,121V478M291.12,121V478M305.75,121V478M320.38,121V478M335.00,121V478M349.62,121V478M364.25,121V478M378.88,121V478M393.50,121V478M408.12,121V478M422.75,121V478M437.38,121V478M452.00,121V478M466.62,121V478M481.25,121V478M495.88,121V478M510.50,121V478M525.12,121V478M539.75,121V478M554.38,121V478M569.00,121V478M583.62,121V478M598.25,121V478M612.88,121V478M627.50,121V478M642.12,121V478M656.75,121V478M671.38,121V478M686.00,121V478M700.62,121V478M715.25,121V478M729.88,121V478M744.50,121V478M759.12,121V478M773.75,121V478M788.38,121V478M803.00,121V478M817.62,121V478M832.25,121V478M846.88,121V478M861.50,121V478M876.12,121V478M890.75,121V478M905.38,121V478M920.00,121V478M934.62,121V478M949.25,121V478M963.88,121V478M978.50,121V478M85,133.25H986M85,147.83H986M85,162.41H986M85,176.99H986M85,191.57H986M85,206.15H986M85,220.73H986M85,235.31H986M85,249.89H986M85,264.47H986M85,279.05H986M85,293.63H986M85,308.21H986M85,322.79H986M85,337.37H986M85,351.95H986M85,366.53H986M85,381.11H986M85,395.69H986M85,410.27H986M85,424.85H986M85,439.43H986M85,454.01H986M85,468.59H986" stroke="#e1e1e1" stroke-width="1.45" fill="none"/>
<rect x="218.3" y="100" width="147" height="62.4" fill="#ffffff" stroke="#7f7f7f" stroke-width="1" />
<polygon points="285.50,198.90 362.30,198.90 340.10,219.30 263.40,219.30" fill="#ffffff" stroke="#7f7f7f" stroke-width="1" />
<polygon points="278.70,195.55 355.50,195.55 333.30,215.95 256.60,215.95" fill="#ffffff" stroke="#7f7f7f" stroke-width="1" />
<polygon points="271.90,192.20 348.70,192.20 326.50,212.60 249.80,212.60" fill="#ffffff" stroke="#7f7f7f" stroke-width="1" />
<text x="266.00" y="203.00" font-size="8.6" fill="#1e1e1e" textLength="79.10" lengthAdjust="spacingAndGlyphs" stroke="#1e1e1e" stroke-width="0.05" >Table Data as Collection</text>
<text x="295.30" y="214.10" font-size="8.6" fill="#1e1e1e" textLength="21.50" lengthAdjust="spacingAndGlyphs" stroke="#1e1e1e" stroke-width="0.05" >Empty</text>
<polygon points="238.50,236.10 304.50,236.10 285.10,262.30 219.10,262.30" fill="#ffffff" stroke="#7f7f7f" stroke-width="1" />
<polygon points="327.00,236.10 393.00,236.10 373.60,262.30 307.60,262.30" fill="#ffffff" stroke="#7f7f7f" stroke-width="1" />
<polygon points="238.50,265.00 304.50,265.00 285.10,292.20 219.10,292.20" fill="#ffffff" stroke="#7f7f7f" stroke-width="1" />
<polygon points="327.00,265.00 393.00,265.00 373.60,292.20 307.60,292.20" fill="#ffffff" stroke="#7f7f7f" stroke-width="1" />
<polygon points="327.20,308.50 391.60,308.50 372.20,335.20 307.80,335.20" fill="#ffffff" stroke="#7f7f7f" stroke-width="1" />
<text x="243.30" y="246.90" font-size="8.6" fill="#1e1e1e" textLength="38.00" lengthAdjust="spacingAndGlyphs" stroke="#1e1e1e" stroke-width="0.05" >Row Count</text>
<text x="260.27" y="257.80" font-size="8.6" fill="#1e1e1e" textLength="4.07" lengthAdjust="spacingAndGlyphs" stroke="#1e1e1e" stroke-width="0.05" >0</text>
<text x="340.80" y="252.20" font-size="8.6" fill="#1e1e1e" textLength="17.90" lengthAdjust="spacingAndGlyphs" stroke="#1e1e1e" stroke-width="0.05" >PstKy</text>
<text x="236.60" y="281.90" font-size="8.6" fill="#1e1e1e" textLength="50.00" lengthAdjust="spacingAndGlyphs" stroke="#1e1e1e" stroke-width="0.05" >Input Account</text>
<text x="322.60" y="281.90" font-size="8.6" fill="#1e1e1e" textLength="53.80" lengthAdjust="spacingAndGlyphs" stroke="#1e1e1e" stroke-width="0.05" >Exception detail</text>
<text x="329.00" y="319.70" font-size="8.6" fill="#1e1e1e" textLength="40.00" lengthAdjust="spacingAndGlyphs" stroke="#1e1e1e" stroke-width="0.05" >Loop count</text>
<text x="346.97" y="330.00" font-size="8.6" fill="#1e1e1e" textLength="4.07" lengthAdjust="spacingAndGlyphs" stroke="#1e1e1e" stroke-width="0.05" >1</text>
<line x1="482.0" y1="145.4" x2="482.0" y2="425.3" stroke="#969696" stroke-width="1.5" />
<polygon points="477.90,159.10 486.10,159.10 482.00,163.90" fill="#606060" stroke="none" stroke-width="1" />
<polygon points="477.90,291.00 486.10,291.00 482.00,296.00" fill="#606060" stroke="none" stroke-width="1" />
<polygon points="477.90,414.20 486.10,414.20 482.00,419.50" fill="#606060" stroke="none" stroke-width="1" />
<rect x="423.5" y="161.8" width="174.9" height="117.2" fill="#cce0f5"/>
<clipPath id="blk"><rect x="423.5" y="161.8" width="174.9" height="117.2"/></clipPath>
<path d="M101.00,121V478M115.62,121V478M130.25,121V478M144.88,121V478M159.50,121V478M174.12,121V478M188.75,121V478M203.38,121V478M218.00,121V478M232.62,121V478M247.25,121V478M261.88,121V478M276.50,121V478M291.12,121V478M305.75,121V478M320.38,121V478M335.00,121V478M349.62,121V478M364.25,121V478M378.88,121V478M393.50,121V478M408.12,121V478M422.75,121V478M437.38,121V478M452.00,121V478M466.62,121V478M481.25,121V478M495.88,121V478M510.50,121V478M525.12,121V478M539.75,121V478M554.38,121V478M569.00,121V478M583.62,121V478M598.25,121V478M612.88,121V478M627.50,121V478M642.12,121V478M656.75,121V478M671.38,121V478M686.00,121V478M700.62,121V478M715.25,121V478M729.88,121V478M744.50,121V478M759.12,121V478M773.75,121V478M788.38,121V478M803.00,121V478M817.62,121V478M832.25,121V478M846.88,121V478M861.50,121V478M876.12,121V478M890.75,121V478M905.38,121V478M920.00,121V478M934.62,121V478M949.25,121V478M963.88,121V478M978.50,121V478M85,133.25H986M85,147.83H986M85,162.41H986M85,176.99H986M85,191.57H986M85,206.15H986M85,220.73H986M85,235.31H986M85,249.89H986M85,264.47H986M85,279.05H986M85,293.63H986M85,308.21H986M85,322.79H986M85,337.37H986M85,351.95H986M85,366.53H986M85,381.11H986M85,395.69H986M85,410.27H986M85,424.85H986M85,439.43H986M85,454.01H986M85,468.59H986" stroke="#b3c3d3" stroke-width="1.3" fill="none" clip-path="url(#blk)"/>
<rect x="423.5" y="161.8" width="174.9" height="117.2" fill="none" stroke="#7a7a7a" stroke-width="1.1"/>
<line x1="482.0" y1="161.8" x2="482.0" y2="279" stroke="#969696" stroke-width="1.5" />
<polygon points="477.90,159.10 486.10,159.10 482.00,163.90" fill="#606060" stroke="none" stroke-width="1" />
<rect x="423.6" y="161.8" width="25.8" height="11.6" fill="#ffffff" stroke="#303030" stroke-width="1" />
<text x="425.20" y="170.50" font-size="8.6" fill="#1e1e1e" textLength="23.00" lengthAdjust="spacingAndGlyphs" stroke="#1e1e1e" stroke-width="0.05" >Block2</text>
<polygon points="452.80,145.40 452.80,128.80 460.00,121.20 502.30,121.20 509.60,128.80 509.60,145.40" fill="#ffffff" stroke="#7f7f7f" stroke-width="1" />
<text x="461.60" y="135.60" font-size="8.6" fill="#1e1e1e" textLength="39.30" lengthAdjust="spacingAndGlyphs" stroke="#1e1e1e" stroke-width="0.05" >Loop Start2</text>
<polygon points="453.00,177.40 504.50,177.40 509.60,190.60 504.50,203.90 453.00,203.90" fill="#ffffff" stroke="#7f7f7f" stroke-width="1" />
<text x="464.30" y="193.50" font-size="8.6" fill="#1e1e1e" textLength="33.80" lengthAdjust="spacingAndGlyphs" stroke="#1e1e1e" stroke-width="0.05" >Set details</text>
<line x1="596.4" y1="176.8" x2="614.1" y2="176.8" stroke="#969696" stroke-width="1.5" />
<polygon points="602.80,173.20 602.80,180.40 607.80,176.80" fill="#606060" stroke="none" stroke-width="1" />
<polygon points="540.80,187.30 540.80,169.30 568.60,162.50 596.40,169.30 596.40,187.30" fill="#ffffff" stroke="#7f7f7f" stroke-width="1" />
<rect x="540.8" y="187.3" width="55.6" height="3.1" fill="#ff0000" stroke="none" stroke-width="1" />
<text x="552.50" y="180.00" font-size="8.6" fill="#1e1e1e" textLength="31.90" lengthAdjust="spacingAndGlyphs" stroke="#1e1e1e" stroke-width="0.05" >Recover1</text>
<line x1="669.6" y1="176.4" x2="686.1" y2="176.4" stroke="#969696" stroke-width="1.5" />
<polygon points="675.90,172.80 675.90,180.00 681.20,176.40" fill="#606060" stroke="none" stroke-width="1" />
<polygon points="614.10,176.40 623.80,162.20 659.10,162.20 669.60,176.40 659.10,190.60 623.80,190.60" fill="#ffffff" stroke="#7f7f7f" stroke-width="1" />
<text x="624.60" y="180.00" font-size="8.6" fill="#1e1e1e" textLength="34.80" lengthAdjust="spacingAndGlyphs" stroke="#1e1e1e" stroke-width="0.05" >Get details</text>
<line x1="742.9" y1="176.3" x2="760" y2="176.3" stroke="#969696" stroke-width="1.5" />
<polygon points="748.80,172.70 748.80,179.90 754.00,176.30" fill="#606060" stroke="none" stroke-width="1" />
<line x1="714.5" y1="190.2" x2="714.5" y2="207" stroke="#969696" stroke-width="1.5" />
<polygon points="710.40,195.40 718.60,195.40 714.50,200.80" fill="#606060" stroke="none" stroke-width="1" />
<polygon points="686.10,176.30 714.50,162.20 742.90,176.30 714.50,190.20" fill="#ffffff" stroke="#7f7f7f" stroke-width="1" />
<text x="698.80" y="173.90" font-size="8.6" fill="#1e1e1e" textLength="31.40" lengthAdjust="spacingAndGlyphs" stroke="#1e1e1e" stroke-width="0.05" >Row limit</text>
<text x="698.80" y="184.10" font-size="8.6" fill="#1e1e1e" textLength="31.40" lengthAdjust="spacingAndGlyphs" stroke="#1e1e1e" stroke-width="0.05" >reached?</text>
<text x="744.60" y="166.30" font-size="8.6" fill="#8c8c8c" textLength="11.00" lengthAdjust="spacingAndGlyphs" stroke="#8c8c8c" stroke-width="0.05" >No</text>
<text x="721.70" y="199.90" font-size="8.6" fill="#8c8c8c" textLength="11.30" lengthAdjust="spacingAndGlyphs" stroke="#8c8c8c" stroke-width="0.05" >Yes</text>
<polygon points="763.70,162.20 798.80,162.20 812.00,176.30 798.80,190.30 763.70,190.30" fill="#ffffff" stroke="#7f7f7f" stroke-width="1" />
<rect x="759.8" y="163.2" width="4" height="26.6" fill="#ff0000" stroke="none" stroke-width="1" />
<rect x="812" y="163.2" width="4.1" height="26.6" fill="#ff0000" stroke="none" stroke-width="1" />
<text x="759.80" y="173.90" font-size="8.6" fill="#1e1e1e" textLength="56.20" lengthAdjust="spacingAndGlyphs" stroke="#1e1e1e" stroke-width="0.05" >Error entering F</text>
<text x="770.80" y="183.80" font-size="8.6" fill="#1e1e1e" textLength="33.90" lengthAdjust="spacingAndGlyphs" stroke="#1e1e1e" stroke-width="0.05" >-02 details</text>
<line x1="742" y1="219.8" x2="759.5" y2="219.8" stroke="#969696" stroke-width="1.5" />
<polygon points="748.80,216.20 748.80,223.40 754.00,219.80" fill="#606060" stroke="none" stroke-width="1" />
<polygon points="687.00,209.30 742.00,209.30 742.00,226.30 714.50,233.40 687.00,226.30" fill="#ffffff" stroke="#7f7f7f" stroke-width="1" />
<rect x="687" y="206.6" width="55" height="2.8" fill="#22a84a" stroke="none" stroke-width="1" />
<text x="699.70" y="223.10" font-size="8.6" fill="#1e1e1e" textLength="30.50" lengthAdjust="spacingAndGlyphs" stroke="#1e1e1e" stroke-width="0.05" >Resume1</text>
<line x1="788.5" y1="233.6" x2="788.5" y2="425.5" stroke="#969696" stroke-width="1.4" />
<polygon points="784.40,239.40 792.60,239.40 788.50,244.40" fill="#606060" stroke="none" stroke-width="1" />
<polygon points="784.40,284.00 792.60,284.00 788.50,288.80" fill="#606060" stroke="none" stroke-width="1" />
<polygon points="784.40,327.20 792.60,327.20 788.50,332.20" fill="#606060" stroke="none" stroke-width="1" />
<polygon points="784.40,371.00 792.60,371.00 788.50,375.80" fill="#606060" stroke="none" stroke-width="1" />
<polygon points="784.40,414.30 792.60,414.30 788.50,419.20" fill="#606060" stroke="none" stroke-width="1" />
<polygon points="759.50,206.30 809.80,206.30 815.80,219.90 809.80,233.60 759.50,233.60" fill="#ffffff" stroke="#7f7f7f" stroke-width="1" />
<text x="770.80" y="222.70" font-size="8.6" fill="#1e1e1e" textLength="33.40" lengthAdjust="spacingAndGlyphs" stroke="#1e1e1e" stroke-width="0.05" >Check tax</text>
<polygon points="760.20,251.00 816.10,251.00 811.20,264.20 816.10,277.30 760.20,277.30 764.60,264.20" fill="#ffffff" stroke="#7f7f7f" stroke-width="1" />
<text x="761.00" y="266.90" font-size="8.6" fill="#1e1e1e" textLength="53.70" lengthAdjust="spacingAndGlyphs" stroke="#1e1e1e" stroke-width="0.05" >Press Fast entry</text>
<line x1="810.6" y1="307.7" x2="828" y2="307.7" stroke="#969696" stroke-width="1.4" />
<polygon points="825.40,304.10 825.40,311.30 819.50,307.70" fill="#606060" stroke="none" stroke-width="1" />
<line x1="815" y1="395.6" x2="828" y2="395.6" stroke="#969696" stroke-width="1.5" />
<polygon points="820.00,392.00 820.00,399.20 825.20,395.60" fill="#606060" stroke="none" stroke-width="1" />
<line x1="832.4" y1="311.6" x2="832.4" y2="391.6" stroke="#969696" stroke-width="1.4" />
<polygon points="828.30,354.50 836.50,354.50 832.40,349.80" fill="#606060" stroke="none" stroke-width="1" />
<circle cx="832.4" cy="307.6" r="4" fill="#ffffff" stroke="#707070" stroke-width="1"/>
<circle cx="832.4" cy="395.6" r="4" fill="#ffffff" stroke="#707070" stroke-width="1"/>
<text x="816.20" y="384.50" font-size="8.6" fill="#8c8c8c" textLength="10.20" lengthAdjust="spacingAndGlyphs" stroke="#8c8c8c" stroke-width="0.05" >No</text>
<polygon points="760.00,294.80 816.00,294.80 810.60,307.80 816.00,320.70 760.00,320.70 765.00,307.80" fill="#ffffff" stroke="#7f7f7f" stroke-width="1" />
<text x="774.80" y="305.50" font-size="8.6" fill="#1e1e1e" textLength="26.20" lengthAdjust="spacingAndGlyphs" stroke="#1e1e1e" stroke-width="0.05" >Execute</text>
<text x="769.10" y="315.90" font-size="8.6" fill="#1e1e1e" textLength="38.00" lengthAdjust="spacingAndGlyphs" stroke="#1e1e1e" stroke-width="0.05" >Transaction</text>
<polygon points="760.40,351.20 771.40,337.30 804.90,337.30 815.60,351.20 804.90,365.00 771.40,365.00" fill="#ffffff" stroke="#7f7f7f" stroke-width="1" />
<text x="762.00" y="354.70" font-size="8.6" fill="#1e1e1e" textLength="51.70" lengthAdjust="spacingAndGlyphs" stroke="#1e1e1e" stroke-width="0.05" >Increase count</text>
<polygon points="760.00,395.60 788.70,382.40 815.50,395.60 788.70,408.40" fill="#ffffff" stroke="#7f7f7f" stroke-width="1" />
<text x="762.00" y="398.10" font-size="8.6" fill="#1e1e1e" textLength="50.40" lengthAdjust="spacingAndGlyphs" stroke="#1e1e1e" stroke-width="0.05" >Reached limit?</text>
<text x="795.30" y="418.60" font-size="8.6" fill="#8c8c8c" textLength="11.10" lengthAdjust="spacingAndGlyphs" stroke="#8c8c8c" stroke-width="0.05" >Yes</text>
<line x1="660" y1="439.5" x2="764.7" y2="439.5" stroke="#969696" stroke-width="1.5" />
<polygon points="747.30,435.90 747.30,443.10 742.00,439.50" fill="#606060" stroke="none" stroke-width="1" />
<polygon points="759.60,425.50 815.70,425.50 809.80,439.50 815.70,452.40 759.60,452.40 764.70,439.50" fill="#ffffff" stroke="#7f7f7f" stroke-width="1" />
<text x="774.40" y="436.80" font-size="8.6" fill="#1e1e1e" textLength="26.50" lengthAdjust="spacingAndGlyphs" stroke="#1e1e1e" stroke-width="0.05" >Execute</text>
<text x="768.90" y="447.00" font-size="8.6" fill="#1e1e1e" textLength="38.30" lengthAdjust="spacingAndGlyphs" stroke="#1e1e1e" stroke-width="0.05" >Transaction</text>
<polygon points="682.50,441.00 692.30,429.30 720.60,429.30 728.30,441.00 720.60,452.70 692.30,452.70" fill="#ffffff" stroke="#7f7f7f" stroke-width="1" />
<polygon points="677.50,439.00 687.30,427.30 715.60,427.30 723.30,439.00 715.60,450.70 687.30,450.70" fill="#ffffff" stroke="#7f7f7f" stroke-width="1" />
<polygon points="672.50,437.00 682.30,425.30 710.60,425.30 718.30,437.00 710.60,448.70 682.30,448.70" fill="#ffffff" stroke="#7f7f7f" stroke-width="1" />
<text x="679.60" y="441.90" font-size="8.6" fill="#1e1e1e" textLength="43.00" lengthAdjust="spacingAndGlyphs" stroke="#1e1e1e" stroke-width="0.05" >Reset counts</text>
<line x1="509.1" y1="439.5" x2="672.5" y2="439.5" stroke="#969696" stroke-width="1.5" />
<polygon points="667.00,435.90 667.00,443.10 661.50,439.50" fill="#606060" stroke="none" stroke-width="1" />
<polygon points="593.30,435.90 593.30,443.10 587.40,439.50" fill="#606060" stroke="none" stroke-width="1" />
<polygon points="521.80,435.90 521.80,443.10 516.00,439.50" fill="#606060" stroke="none" stroke-width="1" />
<polygon points="598.90,425.30 648.40,425.30 655.30,439.00 648.40,452.20 598.90,452.20" fill="#ffffff" stroke="#7f7f7f" stroke-width="1" />
<text x="610.40" y="441.60" font-size="8.6" fill="#1e1e1e" textLength="33.40" lengthAdjust="spacingAndGlyphs" stroke="#1e1e1e" stroke-width="0.05" >Set details</text>
<polygon points="527.90,439.20 538.60,425.60 570.70,425.60 581.10,439.20 570.70,452.40 538.60,452.40" fill="#ffffff" stroke="#7f7f7f" stroke-width="1" />
<text x="528.60" y="441.60" font-size="8.6" fill="#1e1e1e" textLength="51.40" lengthAdjust="spacingAndGlyphs" stroke="#1e1e1e" stroke-width="0.05" >Increase count</text>
<polygon points="453.30,395.40 464.20,381.90 497.80,381.90 509.00,395.40 497.80,408.60 464.20,408.60" fill="#ffffff" stroke="#7f7f7f" stroke-width="1" />
<text x="454.30" y="398.30" font-size="8.6" fill="#1e1e1e" textLength="53.60" lengthAdjust="spacingAndGlyphs" stroke="#1e1e1e" stroke-width="0.05" >Increase count</text>
<polygon points="453.00,425.60 509.30,425.60 509.30,443.80 499.00,452.40 464.30,452.40 453.00,443.80" fill="#ffffff" stroke="#7f7f7f" stroke-width="1" />
<text x="462.30" y="442.00" font-size="8.6" fill="#1e1e1e" textLength="37.40" lengthAdjust="spacingAndGlyphs" stroke="#1e1e1e" stroke-width="0.05" >Loop End2</text>
<line x1="469.1" y1="452.7" x2="450.7" y2="470.2" stroke="#969696" stroke-width="1.2" />
<polygon points="457.92,463.29 464.23,462.39 459.13,457.03" fill="#606060" stroke="none" stroke-width="1" />
<rect x="424.6" y="470.6" width="26" height="20" fill="#ffffff" stroke="#f01010" stroke-width="1.9" rx="3"/>
<g fill="#ffffff" stroke="#8a8a8a" stroke-width="0.8"><circle cx="429" cy="475.5" r="1.8"/><circle cx="446.3" cy="475.5" r="1.8"/></g>
<path d="M545.5,472.5 Q553.8,466.5 562.5,472.5" fill="none" stroke="#8a8a8a" stroke-width="1" />
<g fill="#ffffff" stroke="#8a8a8a" stroke-width="0.9"><circle cx="543" cy="471.8" r="2.1"/><circle cx="564.6" cy="471.8" r="2.1"/></g>
<path d="M542.4,474 L542,477.5 M565.2,474 L565.6,477.5" fill="none" stroke="#8a8a8a" stroke-width="0.9" />
</g>
<path d="M85,477.5 V121.5 H985.5 V477.5 Z" fill="none" stroke="#5a5a5a" stroke-width="1.2" />
<rect x="986" y="121" width="13" height="357" fill="#f0f0f0" stroke="none" stroke-width="1" />
<rect x="987" y="275.3" width="10.6" height="59.3" fill="#cdcdcd" stroke="none" stroke-width="1" />
<path d="M989.3,130 L992.4,126.8 L995.5,130" fill="none" stroke="#404040" stroke-width="1.3" />
<path d="M989.3,470.2 L992.4,473.4 L995.5,470.2" fill="none" stroke="#404040" stroke-width="1.3" />
<rect x="85" y="478" width="901" height="13" fill="#f0f0f0" stroke="none" stroke-width="1" />
<rect x="343.5" y="479" width="403.4" height="10.8" fill="#cdcdcd" stroke="none" stroke-width="1" />
<path d="M92,481.5 L89,484.5 L92,487.5" fill="none" stroke="#505050" stroke-width="1.3" />
<path d="M978,481.5 L981,484.5 L978,487.5" fill="none" stroke="#505050" stroke-width="1.3" />
<rect x="82" y="491" width="917" height="23" fill="#fcfcfc" stroke="none" stroke-width="1" />
<rect x="986" y="478" width="13" height="13" fill="#fcfcfc" stroke="none" stroke-width="1" />
<rect x="83.5" y="494.5" width="915" height="19" fill="#ffffff" stroke="#b8b8b8" stroke-width="1" />
<line x1="83" y1="513.5" x2="999" y2="513.5" stroke="#e8e0f0" stroke-width="1" />
<path d="M955.5,518.5 Q955.5,517.6 957,517.6 H964 Q965.2,517.6 965.2,519 Q965.2,520.3 963.8,520.3 V527.5 H955.5 Z" fill="#ffffff" stroke="#f08a30" stroke-width="1.1" />
<path d="M954.2,527 Q954.2,528.6 956,528.6 H960" fill="none" stroke="#f08a30" stroke-width="1.6" />
<circle cx="964.4" cy="519" r="1.1" fill="#f08a30"/>
<rect x="960.3" y="523.6" width="6.4" height="5.3" fill="#e8e4f0" stroke="#006300" stroke-width="0.6" />
<g fill="#9a9a9a"><rect x="961.8" y="524.8" width="1.4" height="1.2"/><rect x="964" y="524.8" width="1.4" height="1.2"/><rect x="961.8" y="526.6" width="1.4" height="1.2"/><rect x="964" y="526.6" width="1.4" height="1.2"/></g>
<path d="M973.5,518.5 Q973.5,517.6 975,517.6 H982 Q983.2,517.6 983.2,519 Q983.2,520.3 981.8,520.3 V527.5 H973.5 Z" fill="#ffffff" stroke="#f08a30" stroke-width="1.1" />
<path d="M972.2,527 Q972.2,528.6 974,528.6 H978" fill="none" stroke="#f08a30" stroke-width="1.6" />
<circle cx="982.4" cy="519" r="1.1" fill="#f08a30"/>
<circle cx="981" cy="525.3" r="2.6" fill="#ffffff" stroke="#555" stroke-width="1"/>
<line x1="982.9" y1="527.2" x2="985" y2="529.3" stroke="#777" stroke-width="1.3" />
</svg>
</body></html>
